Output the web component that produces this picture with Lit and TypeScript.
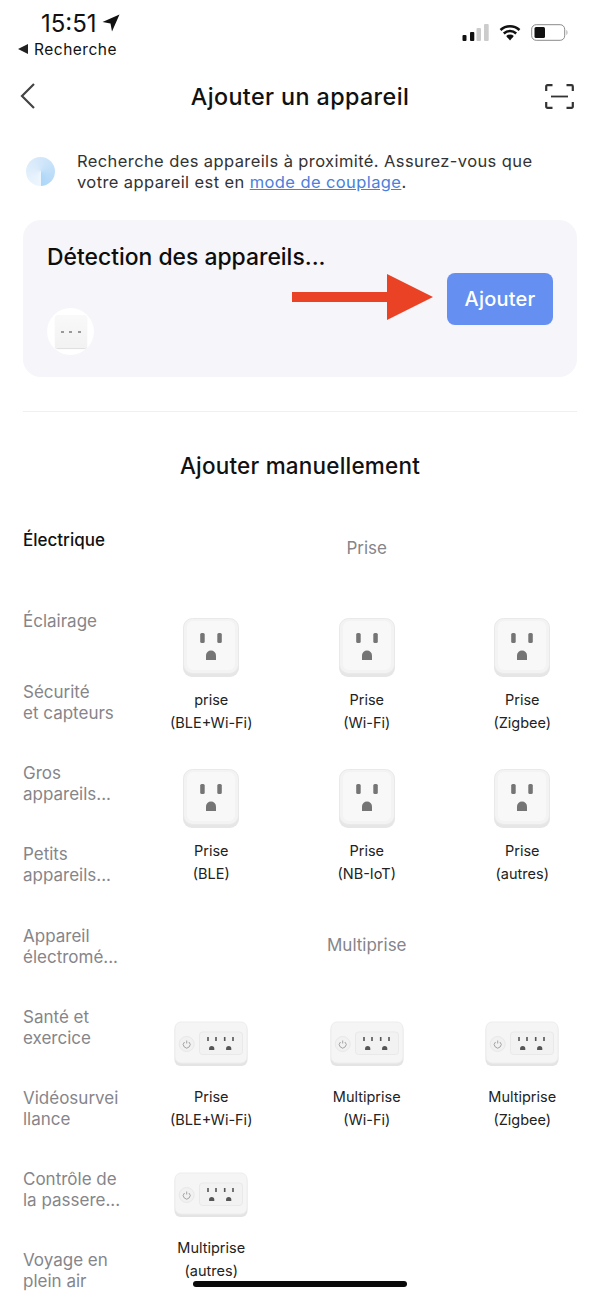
import { LitElement, css, html, svg } from "lit";
import { customElement } from "lit/decorators.js";

const categories = [
  "Électrique",
  "Éclairage",
  "Sécurité\net capteurs",
  "Gros\nappareils...",
  "Petits\nappareils...",
  "Appareil\nélectromé...",
  "Santé et\nexercice",
  "Vidéosurvei\nllance",
  "Contrôle de\nla passere...",
  "Voyage en\nplein air",
];

const sections = [
  {
    title: "Prise",
    kind: "socket",
    items: [
      ["prise", "(BLE+Wi-Fi)"],
      ["Prise", "(Wi-Fi)"],
      ["Prise", "(Zigbee)"],
      ["Prise", "(BLE)"],
      ["Prise", "(NB-IoT)"],
      ["Prise", "(autres)"],
    ],
  },
  {
    title: "Multiprise",
    kind: "strip",
    items: [
      ["Prise", "(BLE+Wi-Fi)"],
      ["Multiprise", "(Wi-Fi)"],
      ["Multiprise", "(Zigbee)"],
      ["Multiprise", "(autres)"],
    ],
  },
];

const socketIcon = html`<svg width="56" height="59" viewBox="0 0 56 59">
  <rect x="0" y="3" width="56" height="56" rx="9" fill="#e6e6e6" />
  <rect x="0.500" y="0.500" width="55" height="55" rx="9" fill="#f3f3f3" stroke="#e9e9e9" />
  <rect x="4" y="3" width="48" height="49" rx="6" fill="#f8f8f8" />
  <rect x="17.200" y="15" width="4.500" height="10" rx="1.500" fill="#757575" />
  <rect x="34.300" y="15" width="4.500" height="10" rx="1.500" fill="#757575" />
  <path d="M23 42v-4.500a5 5 0 0 1 10 0V42z" fill="#757575" />
</svg>`;

const pins = [34, 42, 50.7, 59];
const grounds = [37.7, 54.7];

const stripIcon = html`<svg width="74" height="46" viewBox="0 0 74 46">
  <rect x="0.500" y="3" width="73" height="42" rx="6" fill="#e4e4e4" />
  <rect x="1" y="1" width="72" height="41" rx="6" fill="#f5f5f5" stroke="#ededed" />
  <circle cx="12.700" cy="23" r="7.500" fill="#f1f1f1" stroke="#e8e8e8" />
  <path d="M12.700 19.500v3M10.500 21a3.400 3.400 0 1 0 4.400 0" fill="none" stroke="#9a9a9a" stroke-width="0.900" />
  <rect x="25.500" y="11" width="43" height="22.500" rx="3" fill="#f2f2f2" stroke="#e9e9e9" />
  ${pins.map((x) => svg`<rect x=${x - 0.8} y="16" width="1.600" height="4" fill="#555" />`)}
  ${grounds.map((x) => svg`<path d=${`M${x - 2.6} 29v-1.500a2.600 2.600 0 0 1 5.200 0V29z`} fill="#555" />`)}
</svg>`;

@customElement("app-root")
export class AppRoot extends LitElement {
  static styles = css`
    :host {
      display: block;
      position: relative;
      width: 600px;
      height: 1299px;
      overflow: hidden;
      background: #fff;
      color: #111;
      font-family: Inter, "Liberation Sans", sans-serif;
    }

    .status {
      height: 70px;
      display: flex;
      justify-content: space-between;
      padding: 9px 32px 0 18px;
      box-sizing: border-box;
    }

    .status-left {
      display: flex;
      flex-direction: column;
    }

    .time {
      display: flex;
      align-items: center;
      gap: 5px;
      margin-left: 23px;
      height: 28px;
      font-size: 24px;
      font-weight: 400;
    }

    .back-app {
      display: flex;
      align-items: center;
      gap: 6px;
      margin-top: 1px;
      height: 22px;
      font-size: 15.500px;
      letter-spacing: 0.500px;
    }

    .status-right {
      display: flex;
      align-items: center;
      gap: 10px;
      height: 46px;
    }

    .nav {
      height: 52px;
      display: grid;
      grid-template-columns: 1fr auto 1fr;
      align-items: center;
      padding: 0 26px;
    }

    .nav h1 {
      margin: 0;
      font-size: 23.300px;
      font-weight: 500;
      letter-spacing: 0.400px;
    }

    .chevron {
      margin-left: -7px;
    }

    .scan {
      justify-self: end;
    }

    .hint {
      display: flex;
      align-items: center;
      gap: 22px;
      margin-top: 29px;
      padding: 0 40px 0 26px;
      font-size: 16.500px;
      letter-spacing: 0.400px;
      line-height: 21px;
      color: #333;
    }

    .hint p {
      margin: 0;
    }

    .hint a {
      color: #4a80dc;
      text-decoration: underline;
    }

    .spinner {
      flex: none;
      width: 29px;
      height: 29px;
      margin-top: -2px;
      border-radius: 50%;
      background: conic-gradient(from 180deg, #eef6fd, #d3e7fa 50%, #acd6f8 100%);
    }

    .card {
      position: relative;
      margin: 27px 23px 0;
      height: 157px;
      box-sizing: border-box;
      padding: 23px 24px;
      display: flex;
      justify-content: space-between;
      border-radius: 18px;
      background: #f5f5fa;
    }

    .card h2 {
      margin: 0;
      font-size: 22.900px;
      line-height: 28px;
      font-weight: 500;
      color: #0d0d0d;
    }

    .found {
      width: 47px;
      height: 47px;
      margin-top: 37px;
      border-radius: 50%;
      background: #fff;
      display: flex;
      align-items: center;
      justify-content: center;
    }

    .found-device {
      width: 32px;
      height: 33px;
      border-radius: 3px;
      background: linear-gradient(#f9f9f9, #f2f2f2);
      box-shadow: 0 1px 1px #ddd;
      display: flex;
      align-items: center;
      justify-content: space-between;
      padding: 0 6px;
      box-sizing: border-box;
    }

    .found-device i {
      width: 3px;
      height: 2px;
      background: #999;
    }

    .add {
      align-self: flex-start;
      margin-top: 30px;
      width: 106px;
      height: 52px;
      border: 0;
      border-radius: 8px;
      background: #658ff0;
      color: #fff;
      font: 500 20px Inter, "Liberation Sans", sans-serif;
      letter-spacing: 0.200px;
    }

    .arrow {
      position: absolute;
      left: 269px;
      top: 54px;
    }

    .divider {
      height: 1px;
      margin: 34px 23px 0;
      background: #f0f0f0;
    }

    .manual {
      margin: 40px 0 0;
      text-align: center;
      font-size: 22.500px;
      letter-spacing: 0.200px;
      line-height: 28px;
      font-weight: 500;
    }

    .content {
      display: flex;
      margin-top: 20px;
    }

    .sidebar {
      flex: none;
      width: 133.500px;
      padding-left: 23px;
      box-sizing: border-box;
    }

    .category {
      height: 81.200px;
      display: flex;
      align-items: center;
      font-size: 17px;
      line-height: 21px;
      color: #85858a;
      white-space: pre-line;
    }

    .category.active {
      color: #111;
      font-weight: 500;
    }

    .main {
      flex: 1;
    }

    .section-title {
      text-align: center;
      font-size: 17px;
      color: #85858a;
      box-sizing: border-box;
    }

    .section-title.first {
      height: 118px;
      padding-top: 27px;
      line-height: 42px;
    }

    .section-title.second {
      height: 101px;
      line-height: 50px;
    }

    .grid {
      display: grid;
      grid-template-columns: repeat(3, 155.500px);
    }

    .item {
      height: 151px;
      display: flex;
      flex-direction: column;
      align-items: center;
    }

    .visual {
      height: 70px;
      display: flex;
      align-items: flex-start;
    }

    .strip-grid .visual {
      height: 64px;
    }

    .label {
      text-align: center;
      font-size: 14.500px;
      line-height: 23px;
      color: #222;
    }

    .home {
      position: absolute;
      left: 193px;
      bottom: 12px;
      width: 214px;
      height: 6px;
      border-radius: 3px;
      background: #0a0a0a;
    }
  `;

  render() {
    return html`
      <div class="status">
        <div class="status-left">
          <div class="time">
            15:51
            <svg width="18" height="18" viewBox="0 0 18 18"><path d="M17.500 0.500 0.500 8l8 1.500 1.500 8z" fill="#111" /></svg>
          </div>
          <div class="back-app">
            <svg width="10" height="10" viewBox="0 0 10 10"><path d="M10 0v10L0 5z" fill="#222" /></svg>
            Recherche
          </div>
        </div>
        <div class="status-right">
          <svg width="27" height="17" viewBox="0 0 27 17">
            <rect x="0.500" y="11" width="4" height="6" rx="1" fill="#111" />
            <rect x="8" y="8" width="4.300" height="9" rx="1" fill="#111" />
            <rect x="14.500" y="4" width="4.500" height="13" rx="1" fill="#ccc" />
            <rect x="22" y="0" width="4.700" height="17" rx="1" fill="#ccc" />
          </svg>
          <svg width="22" height="17" viewBox="0 0 22 17">
            <path d="M1.500 6a14 14 0 0 1 19 0M4.800 9.500a9.200 9.200 0 0 1 12.400 0M8 13a4.500 4.500 0 0 1 6 0" fill="none" stroke="#111" stroke-width="2.500" />
            <path d="M8.500 13.500 11 11l2.500 2.500L11 16.500z" fill="#111" />
          </svg>
          <svg width="37" height="17" viewBox="0 0 37 17">
            <rect x="0.700" y="0.700" width="33" height="15.600" rx="4.500" fill="#fff" stroke="#8a8a8a" />
            <rect x="3.500" y="3" width="10.500" height="11" rx="1.500" fill="#111" />
            <path d="M35.500 6c1.200.4 1.200 4.600 0 5z" fill="#999" />
          </svg>
        </div>
      </div>

      <div class="nav">
        <svg class="chevron" width="18" height="28" viewBox="0 0 18 28">
          <path d="M15 2 3 14l12 12" fill="none" stroke="#444" stroke-width="2.200" />
        </svg>
        <h1>Ajouter un appareil</h1>
        <svg class="scan" width="29" height="25" viewBox="0 0 29 25">
          <path d="M1.200 7V2.500a1.300 1.300 0 0 1 1.300-1.300h5M21.500 1.200h5a1.300 1.300 0 0 1 1.300 1.300V7M1.200 18v4.500a1.300 1.300 0 0 0 1.300 1.300h5M27.800 18v4.500a1.300 1.300 0 0 1-1.300 1.300h-5" fill="none" stroke="#333" stroke-width="2.200" />
          <path d="M6 12.500h17" stroke="#333" stroke-width="1.800" />
        </svg>
      </div>

      <div class="hint">
        <div class="spinner"></div>
        <p>
          Recherche des appareils à proximité. Assurez-vous que votre appareil est en
          <a href="#">mode de couplage</a>.
        </p>
      </div>

      <div class="card">
        <div>
          <h2>Détection des appareils...</h2>
          <div class="found">
            <div class="found-device"><i></i><i></i><i></i></div>
          </div>
        </div>
        <button class="add">Ajouter</button>
        <svg class="arrow" width="142" height="46" viewBox="0 0 142 46">
          <path d="M0 18h95V0l46 23-46 23V28H0z" fill="#e94225" />
        </svg>
      </div>

      <div class="divider"></div>
      <h2 class="manual">Ajouter manuellement</h2>

      <div class="content">
        <div class="sidebar">
          ${categories.map(
            (c, i) => html`<div class="category ${i === 0 ? "active" : ""}">${c}</div>`
          )}
        </div>
        <div class="main">
          ${sections.map(
            (s, i) => html`
              <div class="section-title ${i === 0 ? "first" : "second"}">${s.title}</div>
              <div class="grid ${s.kind === "strip" ? "strip-grid" : ""}">
                ${s.items.map(
                  ([a, b]) => html`
                    <div class="item">
                      <div class="visual">${s.kind === "strip" ? stripIcon : socketIcon}</div>
                      <div class="label">${a}<br />${b}</div>
                    </div>
                  `
                )}
              </div>
            `
          )}
        </div>
      </div>

      <div class="home"></div>
    `;
  }
}
